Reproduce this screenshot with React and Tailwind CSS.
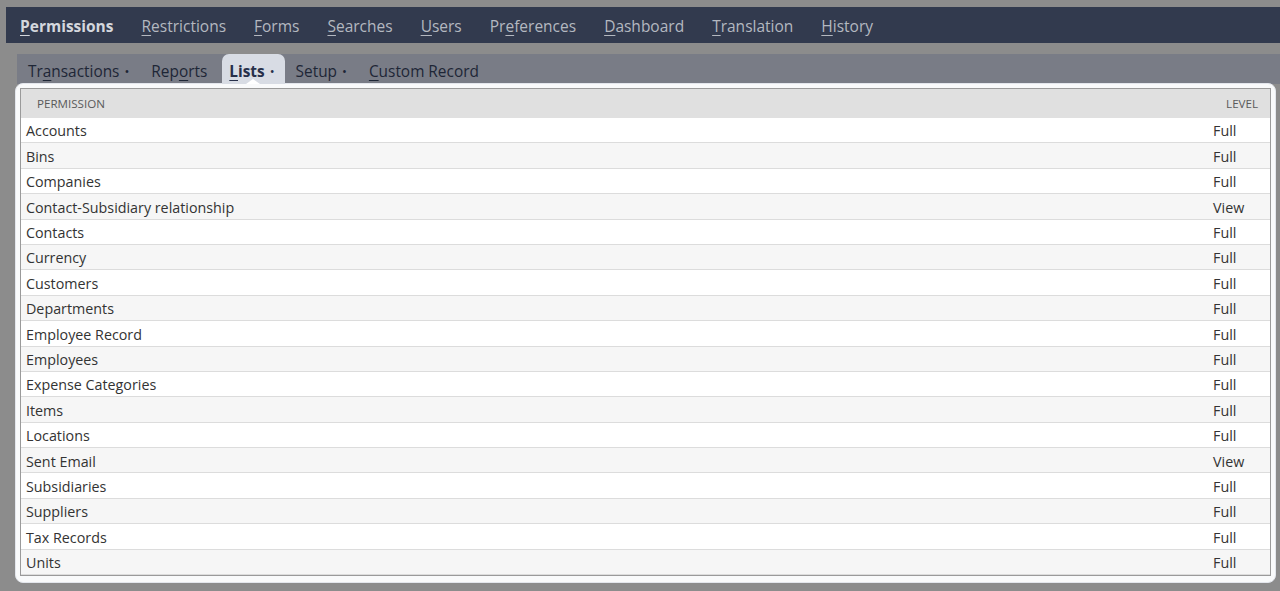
import React from 'react'

const NAV = [
  { pre: '', key: 'P', post: 'ermissions', active: true },
  { pre: '', key: 'R', post: 'estrictions' },
  { pre: '', key: 'F', post: 'orms' },
  { pre: '', key: 'S', post: 'earches' },
  { pre: '', key: 'U', post: 'sers' },
  { pre: 'Pr', key: 'e', post: 'ferences' },
  { pre: '', key: 'D', post: 'ashboard' },
  { pre: '', key: 'T', post: 'ranslation' },
  { pre: '', key: 'H', post: 'istory' },
]

const TABS = [
  { pre: 'Tr', key: 'a', post: 'nsactions', dot: true, pad: 'pl-[8px] pr-[8px]' },
  { pre: 'Rep', key: 'o', post: 'rts', pad: 'pl-[8px] pr-[9px]' },
  { pre: '', key: 'L', post: 'ists', dot: true, active: true, pad: 'pl-[7px] pr-[10px]' },
  { pre: 'Setup', key: '', post: '', dot: true, pad: 'pl-[5px] pr-[8px]' },
  { pre: '', key: 'C', post: 'ustom Record', pad: 'pl-[8px] pr-[9px]' },
]

const ROWS = [
  ['Accounts', 'Full'],
  ['Bins', 'Full'],
  ['Companies', 'Full'],
  ['Contact-Subsidiary relationship', 'View'],
  ['Contacts', 'Full'],
  ['Currency', 'Full'],
  ['Customers', 'Full'],
  ['Departments', 'Full'],
  ['Employee Record', 'Full'],
  ['Employees', 'Full'],
  ['Expense Categories', 'Full'],
  ['Items', 'Full'],
  ['Locations', 'Full'],
  ['Sent Email', 'View'],
  ['Subsidiaries', 'Full'],
  ['Suppliers', 'Full'],
  ['Tax Records', 'Full'],
  ['Units', 'Full'],
]

function Label({ item }) {
  return (
    <>
      {item.pre}
      {item.key && <span className="underline underline-offset-[3px] decoration-1">{item.key}</span>}
      {item.post}
    </>
  )
}

export default function App() {
  return (
    <div
      className="w-full h-[591px] bg-[#8c8c8c] pt-[7px] overflow-hidden"
      style={{ fontFamily: '"Open Sans", "Liberation Sans", sans-serif' }}
    >
      {/* Top nav */}
      <div className="ml-[6px] h-[36px] bg-[#323a4e] flex items-center pl-[14px] pt-[4px] gap-[28px]">
        {NAV.map(n => (
          <span
            key={n.post}
            className={`text-[15.5px] leading-none whitespace-nowrap ${n.active ? 'font-bold text-[#d4d7dd]' : 'text-[#b4b8c0]'}`}
          >
            <Label item={n} />
          </span>
        ))}
      </div>

      {/* Sub tabs */}
      <div className="mt-[11px] ml-[17px] h-[30px] bg-[#797c86] flex items-stretch pl-[3px] gap-[6px]">
        {TABS.map(t => (
          <div
            key={t.pre + t.post}
            className={`relative flex items-center pt-[5px] ${t.pad} text-[15.4px] whitespace-nowrap ${t.active ? 'bg-[#d8dce4] rounded-t-[7px] font-bold text-[#27304a]' : 'text-[#1e2636]'}`}
          >
            <span><Label item={t} /></span>
            {t.dot && <span className="ml-[5px] text-[13px] font-normal">•</span>}
            {t.active && (
              <span className="absolute left-1/2 -translate-x-1/2 bottom-0 w-0 h-0 border-l-[7px] border-r-[7px] border-b-[5px] border-l-transparent border-r-transparent border-b-white" />
            )}
          </div>
        ))}
      </div>

      {/* Panel */}
      <div className="-mt-[1px] ml-[15px] w-[1261px] h-[500px] bg-[#f9fafb] rounded-[8px] border border-[#e3e6ec] px-[4px] pt-[4px] pb-[5px]">
        <div className="border border-[#9a9a9a] bg-white">
          <div className="h-[29px] bg-[#e0e0e0] flex items-center text-[11.6px] text-[#5a5a5a]">
            <div className="flex-1 pl-[16px]">PERMISSION</div>
            <div className="pr-[12px]">LEVEL</div>
          </div>
          {ROWS.map(([name, level], i) => (
            <div
              key={name}
              className={`h-[25.4px] pt-[2px] flex items-center text-[14.3px] text-[#333] border-b border-[#dcdcdc] ${i % 2 ? 'bg-[#f6f6f6]' : 'bg-white'}`}
            >
              <div className="flex-1 pl-[5px]">{name}</div>
              <div className="w-[57px]">{level}</div>
            </div>
          ))}
        </div>
      </div>
    </div>
  )
}
